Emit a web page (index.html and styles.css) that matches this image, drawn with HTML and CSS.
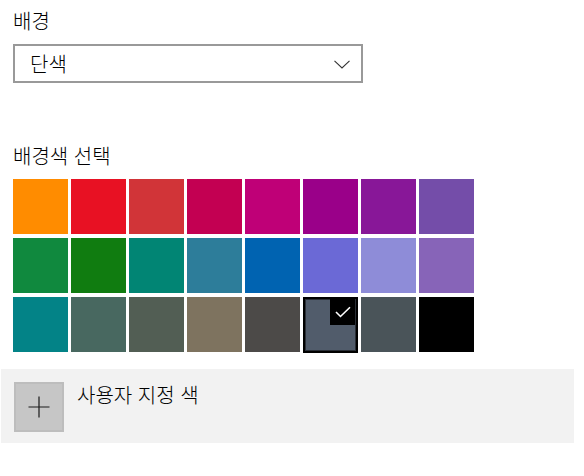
FILE: index.html
```html
<!DOCTYPE html>
<html lang="ko">
<head>
<meta charset="utf-8">
<link rel="stylesheet" href="styles.css">
</head>
<body>
<div class="page">
  <div class="label label-top">배경</div>
  <div class="dropdown">
    <span class="dropdown-text">단색</span>
    <svg class="chevron" width="16" height="9" viewBox="0 0 16 9"><path d="M0.5 0.8 L8 8 L15.5 0.8" fill="none" stroke="#333" stroke-width="1.1"/></svg>
  </div>
  <div class="label label-colors">배경색 선택</div>
  <div class="grid">
    <div class="sw" style="background:#FF8C00"></div>
    <div class="sw" style="background:#E81123"></div>
    <div class="sw" style="background:#D13438"></div>
    <div class="sw" style="background:#C30052"></div>
    <div class="sw" style="background:#BF0077"></div>
    <div class="sw" style="background:#9A0089"></div>
    <div class="sw" style="background:#881798"></div>
    <div class="sw" style="background:#744DA9"></div>
    <div class="sw" style="background:#10893E"></div>
    <div class="sw" style="background:#107C10"></div>
    <div class="sw" style="background:#018574"></div>
    <div class="sw" style="background:#2D7D9A"></div>
    <div class="sw" style="background:#0063B1"></div>
    <div class="sw" style="background:#6B69D6"></div>
    <div class="sw" style="background:#8E8CD8"></div>
    <div class="sw" style="background:#8764B8"></div>
    <div class="sw" style="background:#038387"></div>
    <div class="sw" style="background:#486860"></div>
    <div class="sw" style="background:#525E54"></div>
    <div class="sw" style="background:#7E735F"></div>
    <div class="sw" style="background:#4C4A48"></div>
    <div class="sw selected" style="background:#515C6B">
      <span class="check"><svg width="16" height="12" viewBox="0 0 16 12"><path d="M1 6 L5.5 10.5 L15 1.3" fill="none" stroke="#fff" stroke-width="1.6"/></svg></span>
    </div>
    <div class="sw" style="background:#4A5459"></div>
    <div class="sw" style="background:#000000"></div>
  </div>
</div>
<div class="custom">
  <div class="plus-btn">
    <svg width="22" height="22" viewBox="0 0 22 22"><path d="M11 0.5 V21.5 M0.5 11 H21.5" fill="none" stroke="#1a1a1a" stroke-width="1.2"/></svg>
  </div>
  <div class="custom-text">사용자 지정 색</div>
</div>
</body>
</html>
```
FILE: styles.css
```css
html, body {
  margin: 0;
  padding: 0;
  background: #fff;
}
body {
  font-family: "Noto Sans CJK KR", "Noto Sans", sans-serif;
  font-weight: 300;
  color: #000;
  width: 584px;
  height: 476px;
  overflow: hidden;
}
.page {
  padding-left: 13px;
}
.label {
  font-size: 20px;
  line-height: 26px;
  height: 26px;
}
.label-top {
  padding-top: 8px;
}
.dropdown {
  margin-top: 10px;
  box-sizing: border-box;
  width: 350px;
  height: 39px;
  border: 2px solid #999;
  display: flex;
  align-items: center;
  justify-content: space-between;
  padding: 0 11px 0 15px;
}
.dropdown-text {
  font-size: 20px;
  line-height: 26px;
}
.chevron {
  display: block;
  margin-top: 2px;
}
.label-colors {
  margin-top: 60px;
}
.grid {
  margin-top: 10px;
  display: grid;
  grid-template-columns: repeat(8, 55px);
  grid-auto-rows: 55px;
  column-gap: 3px;
  row-gap: 4px;
}
.sw {
  position: relative;
  box-sizing: border-box;
}
.sw.selected {
  height: 56px;
  border: 2px solid #000;
  box-shadow: inset 0 0 0 1px #2a2f36;
}
.check {
  position: absolute;
  top: 0;
  right: 1px;
  width: 25px;
  height: 26px;
  background: #000;
  display: flex;
  align-items: center;
  justify-content: center;
}
.check svg {
  display: block;
}
.custom {
  margin: 17px 0 0 1px;
  width: 573px;
  height: 74px;
  box-sizing: border-box;
  background: #f2f2f2;
  display: flex;
  align-items: flex-start;
  padding: 13px 0 0 13px;
}
.plus-btn {
  box-sizing: border-box;
  width: 50px;
  height: 50px;
  background: #c6c6c6;
  border: 2px solid #bdbdbd;
  display: flex;
  align-items: center;
  justify-content: center;
}
.plus-btn svg {
  display: block;
}
.custom-text {
  margin-left: 13px;
  font-size: 20px;
  line-height: 26px;
  color: #000;
}
```
